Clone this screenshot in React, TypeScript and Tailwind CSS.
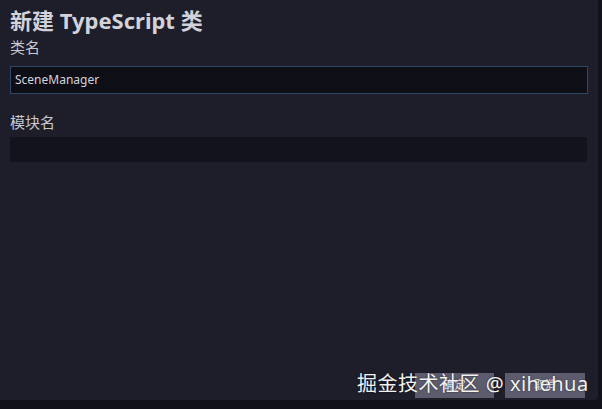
export default function App() {
  return (
    <div className="w-[602px] h-[409px] bg-[#12121a] relative overflow-hidden" style={{ fontFamily: '"Noto Sans", "Noto Sans CJK SC", sans-serif' }}>
      <div className="w-[598px] h-[400px] bg-[#1e1e2a] rounded-br-[4px] flex flex-col px-[10px] pt-[5px]">
        <h1 className="text-[22px] leading-[30px] font-bold text-[#d2d2da]">新建 TypeScript 类</h1>
        <label className="mt-[2px] text-[15px] leading-[20px] text-[#c8c8d0]">类名</label>
        <div className="mt-[9px] h-[28px] w-[578px] bg-[#0e0e17] border border-[#2c4a68] flex items-center px-[4px]">
          <span className="text-[12px] text-[#d4d4dc]">SceneManager</span>
        </div>
        <label className="mt-[18px] text-[15px] leading-[20px] text-[#c8c8d0]">模块名</label>
        <div className="mt-[5px] h-[25px] w-[577px] bg-[#13131d] rounded-[2px]" />
        <div className="flex-1" />
        <div className="flex justify-end gap-[11px] pr-[3px] pb-[2px]">
          <button className="w-[79px] h-[25px] bg-[#5c5c6e] text-[11px] text-[#e6e6ee]">确定</button>
          <button className="w-[80px] h-[25px] bg-[#5c5c6e] text-[11px] text-[#e6e6ee]">取消</button>
        </div>
      </div>
      <div className="absolute left-[357px] top-[369px] text-[20px] leading-[30px] text-[#f2f2f2] [text-shadow:0_0_2px_rgba(0,0,0,0.6)] tracking-[0.5px]">
        掘金技术社区 @ xihehua
      </div>
    </div>
  );
}
